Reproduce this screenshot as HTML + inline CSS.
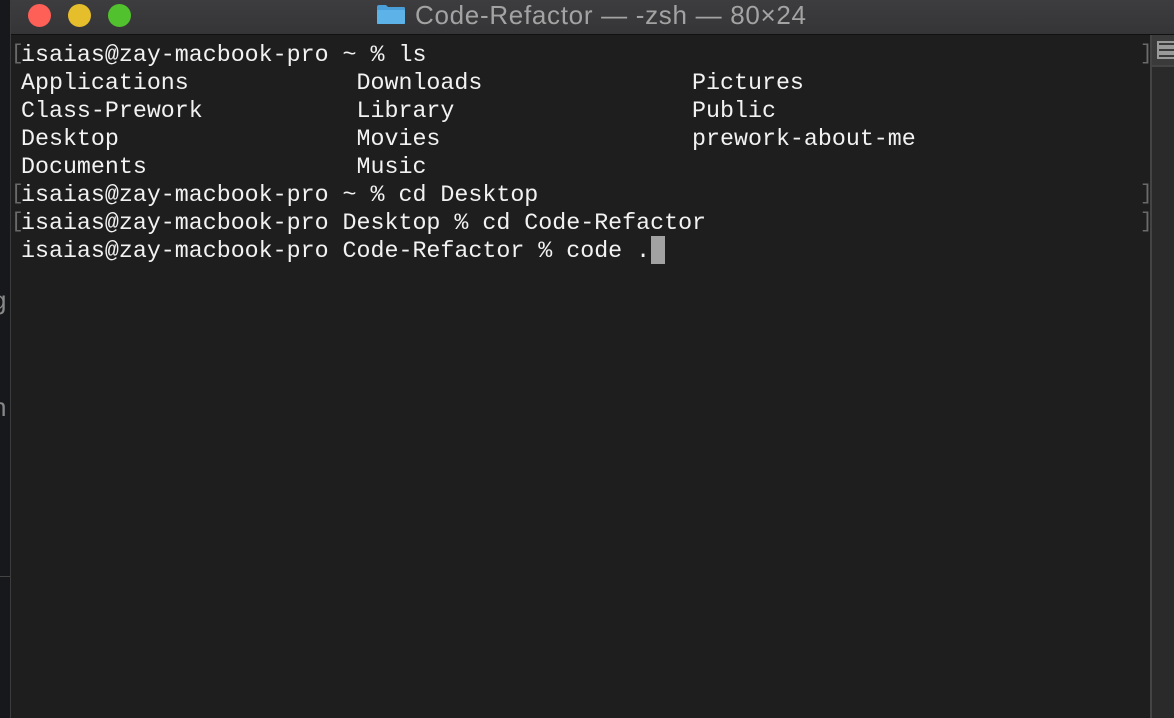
<!DOCTYPE html>
<html><head><style>
body{margin:0;width:1174px;height:718px;overflow:hidden;background:#1e1e1e;position:relative;font-family:"Liberation Sans",sans-serif}
#left{position:absolute;left:0;top:0;width:10px;height:718px;background:#17181b;overflow:hidden}
#win{position:absolute;left:10px;top:0;right:0;bottom:0;background:#1e1e1e;border-left:1px solid #3c3c3c}
#title{position:absolute;left:0;top:0;right:0;height:34px;background:linear-gradient(#3d3d3f,#353537);border-bottom:1px solid #111}
.dot{position:absolute;top:4px;width:23px;height:23px;border-radius:50%}
#ttl{position:absolute;left:404px;top:0px;font-size:26px;letter-spacing:0.7px;color:#a3a3a3;white-space:nowrap}
#folder{position:absolute;left:365px;top:4px;width:30px;height:21px}
#term{position:absolute;left:10px;top:41px;font-family:"Liberation Mono",monospace;font-size:23.3px;line-height:28px;color:#f2f2f2;white-space:pre}
.br{position:absolute;color:#6a6a6a;font-family:"Liberation Mono",monospace;font-size:21px;line-height:28px}
#cursor{position:absolute;left:640px;top:236px;width:14px;height:28px;background:#a2a2a2}
#sb{position:absolute;left:1139px;top:35px;width:25px;bottom:0;background:#2a2a2a;border-left:2px solid #444}
#sbt{position:absolute;left:0;top:0;width:25px;height:30px;background:#3a3a3a;border-bottom:2px solid #444}
</style></head><body>
<div id="left"><span style="position:absolute;left:-8px;top:285px;font-size:26px;color:#888">g</span><span style="position:absolute;left:-8px;top:392px;font-size:26px;color:#888">n</span><div style="position:absolute;left:0;top:576px;width:10px;height:1px;background:#444"></div></div>
<div id="win">
<div id="title">
<div class="dot" style="left:17px;background:#fe5f57"></div>
<div class="dot" style="left:57px;background:#e6bd2b"></div>
<div class="dot" style="left:97px;background:#51c22d"></div>
<svg id="folder" viewBox="0 0 30 21"><path d="M1 3 Q1 1 3 1 H10 L12 3 H28 Q29 3 29 5 V19 Q29 20 28 20 H2 Q1 20 1 19Z" fill="#4a9fd8"/><rect x="1" y="6" width="28" height="14" rx="1" fill="#5db3e8"/></svg>
<div id="ttl">Code-Refactor — -zsh — 80×24</div>
</div>
<div class="br" style="left:0px;top:41px">[</div>
<div class="br" style="left:0px;top:181px">[</div>
<div class="br" style="left:0px;top:209px">[</div>
<div class="br" style="left:1129px;top:41px">]</div>
<div class="br" style="left:1129px;top:181px">]</div>
<div class="br" style="left:1129px;top:209px">]</div>
<div id="term">isaias@zay-macbook-pro ~ % ls
Applications            Downloads               Pictures
Class-Prework           Library                 Public
Desktop                 Movies                  prework-about-me
Documents               Music
isaias@zay-macbook-pro ~ % cd Desktop
isaias@zay-macbook-pro Desktop % cd Code-Refactor
isaias@zay-macbook-pro Code-Refactor % code .</div>
<div id="cursor"></div>
<div id="sb"><div id="sbt"><svg width="25" height="30" viewBox="0 0 25 30"><rect x="6" y="7" width="19" height="16" fill="none" stroke="#9a9a9a" stroke-width="2"/><rect x="7" y="10" width="18" height="4" fill="#9a9a9a"/><rect x="7" y="16" width="18" height="4" fill="#9a9a9a"/></svg></div></div>
</div>
</body></html>
